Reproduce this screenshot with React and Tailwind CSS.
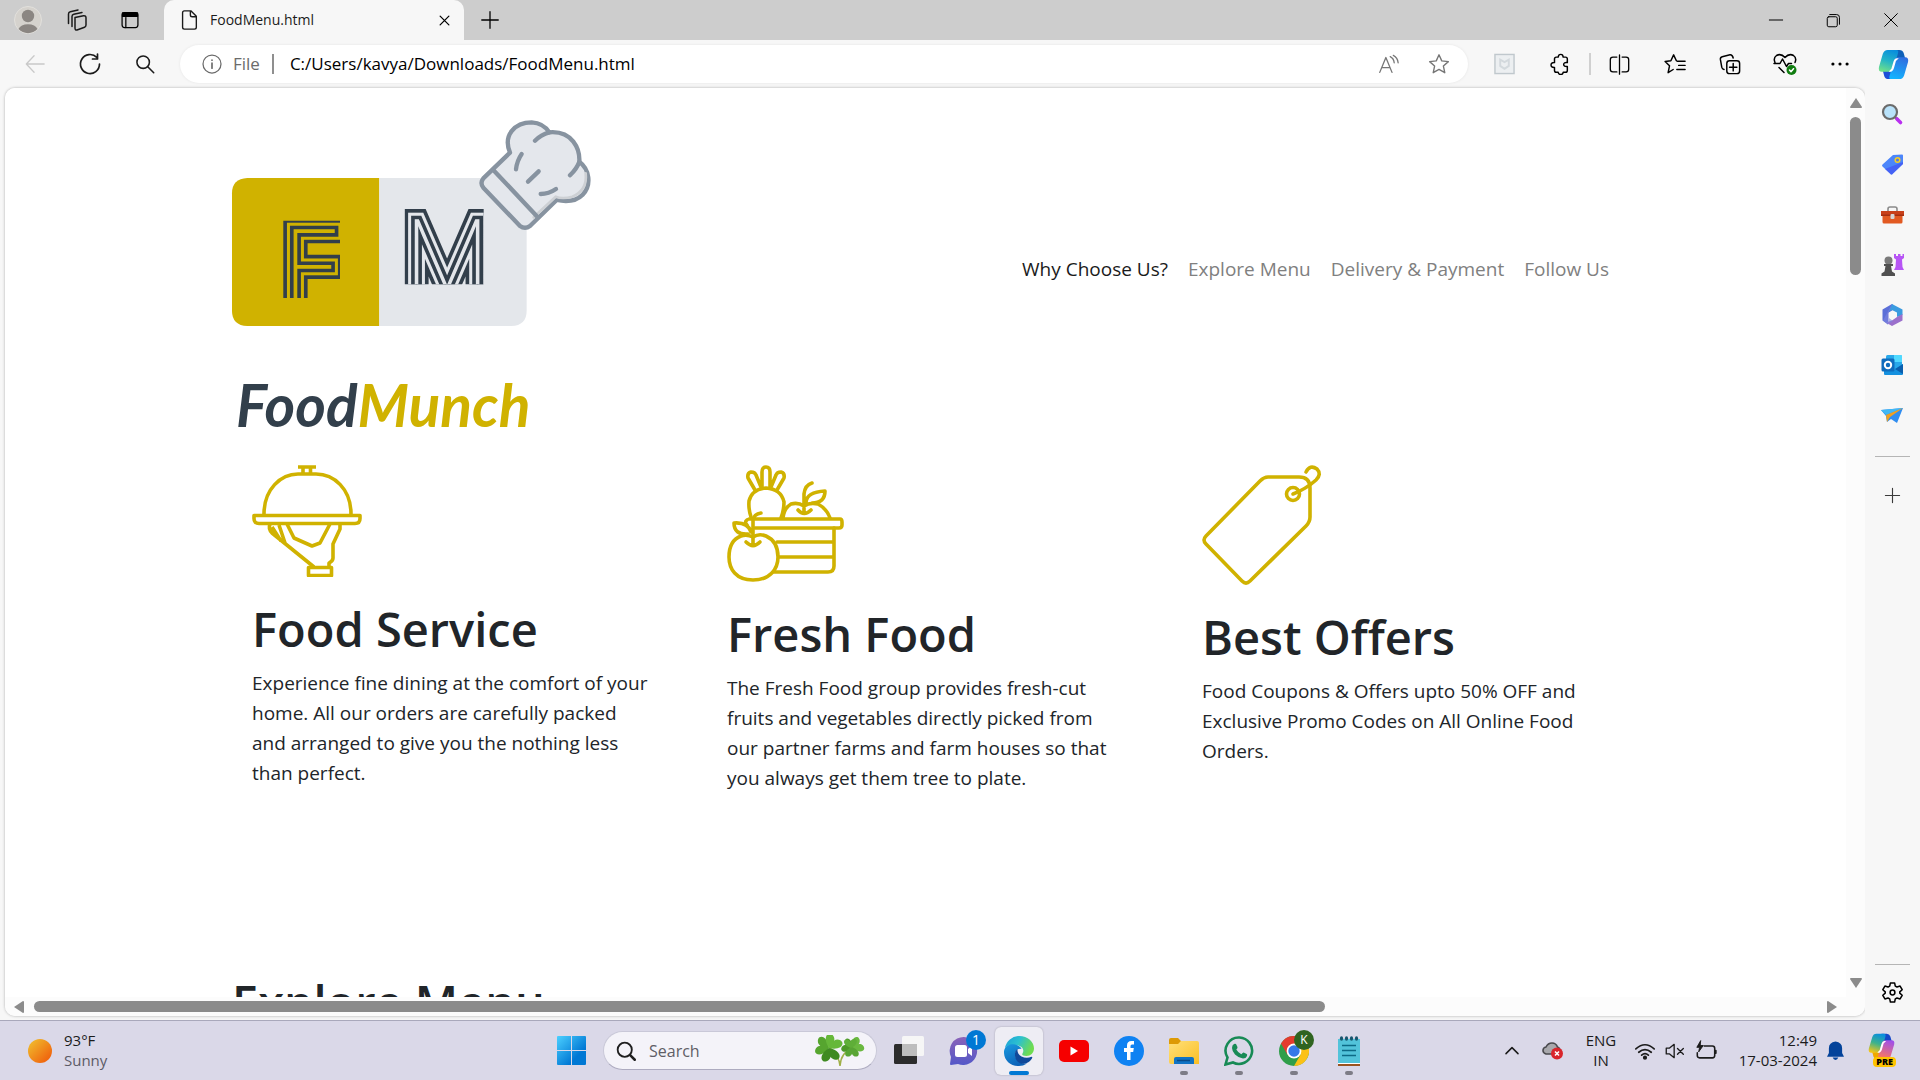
import React from "react";

const GOLD = "#d0b200";
const INK = "#323f4b";

/* ---------- small helpers ---------- */

function Line({ size = 22, sw = 1.5, children, className = "" }) {
  return (
    <svg
      width={size}
      height={size}
      viewBox="0 0 24 24"
      fill="none"
      stroke="currentColor"
      strokeWidth={sw}
      strokeLinecap="round"
      strokeLinejoin="round"
      className={"shrink-0 " + className}
      aria-hidden="true"
    >
      {children}
    </svg>
  );
}

function IconButton({ label, className = "", children }) {
  return (
    <button type="button" aria-label={label} className={"flex shrink-0 items-center justify-center " + className}>
      {children}
    </button>
  );
}

function Copilot({ size = 32, warm = false }) {
  const id = warm ? "cpw" : "cpc";
  return (
    <svg width={size} height={size} viewBox="0 0 32 32" aria-hidden="true" className="shrink-0">
      <defs>
        <linearGradient id={id + "a"} x1="0.6" y1="0" x2="0.3" y2="1">
          <stop offset="0" stopColor="#0a8fdc" />
          <stop offset="0.5" stopColor={warm ? "#3db28c" : "#25b5c6"} />
          <stop offset="1" stopColor={warm ? "#f5c518" : "#6fe08a"} />
        </linearGradient>
        <linearGradient id={id + "b"} x1="0.6" y1="0" x2="0.3" y2="1">
          <stop offset="0" stopColor={warm ? "#a050e8" : "#2f6fe0"} />
          <stop offset="1" stopColor={warm ? "#ff7a59" : "#14b4ff"} />
        </linearGradient>
      </defs>
      <path d="M16 1h6q3.500 0 4.500 3l1.500 5.500h-9q-3 0-4 3z" fill={warm ? "#1447c8" : "#0f60b8"} />
      <path d="M16 31h-5q-3.500 0-4.500-3L5 22.500h8q3 0 4-3z" fill={warm ? "#f0a800" : "#1d4fd8"} />
      <path d="M10 1h9q2.500 0 1.700 3l-4.200 15q-1.200 4.500-5 4.500H4q-4 0-3-5L5 5q1.300-4 5-4z" fill={`url(#${id}a)`} />
      <path d="M22 31h-8.500q-2.500 0-1.700-3L16 13q1.200-4.500 5-4.500h7q4 0 3 5l-4 13.500q-1.300 4-5 4z" fill={`url(#${id}b)`} />
      <path d="M19.500 9.500h2l-3 3-2 7q-1.300 4-4.500 4h-1l2.800-3 2.200-7.500q1-3.500 3.500-3.500z" fill="#fff" />
    </svg>
  );
}

/* ---------- browser chrome ---------- */

function TabStrip() {
  return (
    <div className="flex h-10 shrink-0 items-stretch bg-[#cdcdcd] pl-1">
      <IconButton label="Profile" className="w-12">
        <svg width="28" height="28" viewBox="0 0 28 28" aria-hidden="true">
          <circle cx="14" cy="14" r="13.500" fill="#d5d2cd" stroke="#e2e0dc" />
          <circle cx="14" cy="10" r="6.200" fill="#8b8682" />
          <path d="M4.500 23a10 7 0 0 1 19 0 13 13 0 0 1-19 0z" fill="#8b8682" />
        </svg>
      </IconButton>
      <IconButton label="Workspaces" className="w-[50px] text-[#1b1b1b]">
        <Line size={24} sw={1.500}>
          <path d="M10 9.500l8.500-1.800q2.500-.3 2.500 2V17q0 1.500-1.500 2.200L12 22q-2 .5-2-2z" />
          <path d="M7 18.500V8.500q0-1.800 1.800-2.200L17 4.500" />
          <path d="M3.500 15.500V6q0-1.800 1.800-2.200L13 2" />
        </Line>
      </IconButton>
      <IconButton label="Tab actions" className="w-14 text-black">
        <Line size={20} sw={1.500}>
          <rect x="2.500" y="3" width="19" height="18" rx="3" />
          <path d="M7 9v12" />
          <rect x="3" y="3.500" width="18" height="4" fill="currentColor" />
        </Line>
      </IconButton>
      <div className="ml-[6px] flex w-[300px] items-center rounded-t-[10px] bg-[#f7f7f7] pr-[10px] pl-[14px]">
        <Line size={22} sw={1.500} className="text-[#1b1b1b]">
          <path d="M5 4q0-2 2-2h7l6 6v12q0 2-2 2H7q-2 0-2-2zM13.500 2v4.500q0 2 2 2H20" />
        </Line>
        <span className="ml-[10px] flex-1 text-sm text-[#1b1b1b]">FoodMenu.html</span>
        <IconButton label="Close tab" className="size-5 text-black">
          <Line size={15} sw={2}>
            <path d="M5 5l14 14M19 5L5 19" />
          </Line>
        </IconButton>
      </div>
      <IconButton label="New tab" className="w-[52px] text-black">
        <Line size={22} sw={1.400}>
          <path d="M12 3v18M3 12h18" />
        </Line>
      </IconButton>
      <div className="flex-1" />
      <IconButton label="Minimise" className="w-[58px] text-black">
        <Line size={16} sw={1.500}>
          <path d="M2 12h20" />
        </Line>
      </IconButton>
      <IconButton label="Restore" className="w-[57px] text-black">
        <Line size={15} sw={1.600}>
          <rect x="2" y="6" width="16" height="16" rx="2.500" />
          <path d="M6 2.500h11q4.500 0 4.500 4.500v11" />
        </Line>
      </IconButton>
      <IconButton label="Close" className="w-[58px] text-black">
        <Line size={16} sw={1.500}>
          <path d="M2.500 2.500l19 19M21.500 2.500l-19 19" />
        </Line>
      </IconButton>
    </div>
  );
}

function Toolbar() {
  return (
    <div className="flex h-12 shrink-0 items-center bg-[#f7f7f7] pl-2 text-[#1b1b1b]">
      <IconButton label="Back" className="h-9 w-[54px] text-[#c9c9c9]">
        <Line size={22} sw={1.400}>
          <path d="M22 12H2.500M11 3L2.500 12l8.500 9" />
        </Line>
      </IconButton>
      <IconButton label="Refresh" className="h-9 w-[55px]">
        <Line size={24} sw={1.700}>
          <path d="M21.500 12A9.500 9.500 0 1 1 18.800 5.400M19.500 2v5h-5" />
        </Line>
      </IconButton>
      <IconButton label="Search" className="h-9 w-[55px]">
        <Line size={22} sw={1.700}>
          <circle cx="10" cy="10" r="6.800" />
          <path d="M15 15l6.500 6.500" />
        </Line>
      </IconButton>
      <div className="ml-2 flex h-[38px] flex-1 items-center rounded-full bg-white pl-[22px] pr-[3px] shadow-[0_0_3px_rgba(0,0,0,0.08)]">
        <Line size={20} sw={1.500} className="text-[#6b6b6b]">
          <circle cx="12" cy="12" r="10.800" />
          <path d="M12 11v6M12 7.200v.2" strokeWidth="2" />
        </Line>
        <span className="ml-[11px] text-[17px] text-[#6b6b6b]">File</span>
        <span className="ml-3 h-5 w-[2px] bg-[#8f8f8f]" />
        <input
          aria-label="Address"
          defaultValue="C:/Users/kavya/Downloads/FoodMenu.html"
          className="ml-4 min-w-0 flex-1 bg-transparent text-[17px] text-black outline-none"
        />
        <IconButton label="Read aloud" className="w-[50px] text-[#767676]">
          <Line size={21} sw={1.500}>
            <path d="M2 21L9 4l7 17M4.500 15.500h9M14 3q4 2 4.500 7M17.500 1.500Q22.500 4 23 10" />
          </Line>
        </IconButton>
        <IconButton label="Add to favourites" className="w-[52px] text-[#767676]">
          <Line size={22} sw={1.500}>
            <path d="M12 2l3 6.600 7.200.8-5.400 4.900 1.500 7.200L12 17.900l-6.300 3.600 1.500-7.200L1.800 9.400 9 8.600z" />
          </Line>
        </IconButton>
      </div>
      <IconButton label="McAfee" className="ml-2 h-9 w-14">
        <svg width="21" height="22" viewBox="0 0 22 22" aria-hidden="true">
          <rect x="1" y="1" width="20" height="20" fill="#eceff1" stroke="#c0c8cd" strokeWidth="1.500" />
          <path d="M6.500 6.500L11 9l4.500-2.500V13L11 16l-4.500-3z" fill="none" stroke="#d3d9dd" strokeWidth="2" />
        </svg>
      </IconButton>
      <IconButton label="Extensions" className="h-9 w-14 text-black">
        <Line size={22} sw={1.600}>
          <path d="M8 4.500h2q.3-3 2.800-3t2.700 3H18q2 0 2 2v4q-4-.5-4 2t4 2.200V19q0 2-2 2h-2.500q-.3 2.500-2.700 2.500T10 21H8q-2 0-2-2v-3.200q-3.800.2-3.800-2.700T6 10.500v-4q0-2 2-2z" />
        </Line>
      </IconButton>
      <span className="h-[22px] w-[3px] border-r-2 border-[#d0d0d0]" />
      <IconButton label="Split screen" className="h-9 w-14 text-black">
        <Line size={21} sw={1.500}>
          <path d="M12 1v22M9 3.500H4.500Q1.500 3.500 1.500 6.500v11q0 3 3 3H9M15 3.500h4.500q3 0 3 3v11q0 3-3 3H15" />
        </Line>
      </IconButton>
      <IconButton label="Favourites" className="h-9 w-[55px] text-black">
        <Line size={22} sw={1.600}>
          <path d="M14.500 9H23M16 13.500h7M14 18h9M13.500 8.500L10.500 2 7.500 8.500 1.200 9.200 6 14l-1.500 7.500L10 18" />
        </Line>
      </IconButton>
      <IconButton label="Collections" className="h-9 w-[55px] text-black">
        <Line size={22} sw={1.600}>
          <rect x="8.500" y="8.500" width="14" height="14" rx="3" />
          <path d="M15.500 11.500v8M11.500 15.500h8M5.500 18q-2-.3-2.500-2.500L1.500 7q-.3-2.500 2-3l8.500-2q2.500-.3 3.500 3.500" />
        </Line>
      </IconButton>
      <IconButton label="Browser essentials" className="h-9 w-[55px] text-black">
        <Line size={24} sw={1.500}>
          <path d="M2 10.500Q0 6 3.500 3.500 8 1 12 5.500 16 1 20.500 3.500 24 6 22 10.500M1 11.500h6l2.500-4.500 4 7.500 2-3h3M6 15.500l5 5" />
          <circle cx="18.500" cy="18" r="5" fill="#107c10" stroke="none" />
          <path d="M16.500 18l1.500 1.700 2.500-3" stroke="#fff" />
        </Line>
      </IconButton>
      <IconButton label="Settings and more" className="h-9 w-[55px] text-black">
        <Line size={20}>
          <g fill="currentColor" stroke="none">
            <circle cx="3.500" cy="12" r="1.900" />
            <circle cx="12" cy="12" r="1.900" />
            <circle cx="20.500" cy="12" r="1.900" />
          </g>
        </Line>
      </IconButton>
      <IconButton label="Copilot" className="h-9 w-[53px]">
        <Copilot size={31} />
      </IconButton>
    </div>
  );
}

/* ---------- page ---------- */

function StripedLetter({ x, y, size, bg, children }) {
  const common = {
    x,
    y,
    fontFamily: "Inter, sans-serif",
    fontWeight: 100,
    fontSize: size,
    strokeLinejoin: "miter",
  };
  return (
    <>
      <text {...common} fill={INK} stroke={INK} strokeWidth="66">{children}</text>
      <g aria-hidden="true">
        <text {...common} fill={bg} stroke={bg} strokeWidth="44">{children}</text>
        <text {...common} fill={INK} stroke={INK} strokeWidth="26">{children}</text>
        <text {...common} fill={bg} stroke={bg} strokeWidth="4">{children}</text>
      </g>
    </>
  );
}

function Logo() {
  return (
    <svg width="364" height="338" viewBox="36 0 1092 1014" role="img" aria-label="FoodMunch" className="shrink-0 overflow-visible">
      <defs>
        <clipPath id="fClip">
          <rect x="188" y="362" width="172" height="232" />
        </clipPath>
        <clipPath id="mClip">
          <rect x="554" y="323" width="237" height="230" />
        </clipPath>
      </defs>
      <path d="M478 234v444H82q-46-2-46-46V280q0-44 46-46z" fill={GOLD} />
      <path d="M478 234v444h396q46-2 46-46V280q0-44-46-46z" fill="#e4e7eb" />
      <g clipPath="url(#fClip)">
        <StripedLetter x={188} y={612} size={306} bg={GOLD}>F</StripedLetter>
      </g>
      <g clipPath="url(#mClip)">
        <StripedLetter x={554} y={566} size={284} bg="#e4e7eb">M</StripedLetter>
      </g>
      <g stroke="#8793a0" strokeWidth="13" strokeLinecap="round" strokeLinejoin="round" fill="none">
        <path
          d="M870 158C848 105 885 67 935 67q35 2 53 30 47-4 72 28 20 26 18 60c30 22 38 70 10 99q-27 27-78 16l-80 78q-15 11-30 0L790 263q-11-14 0-28z"
          fill="#e4e7ec"
        />
        <path d="M1097 220q6 50-40 70-30 8-50 0l-66 62" stroke="#cdd0d4" strokeWidth="8" />
        <path d="M945 122q18-18 43-25M1078 185q-7 20-28 41M822 212l130 138" />
        <path d="M905 162q-14 20-17 46M956 214l-32 31M962 282q24 0 46-15" />
      </g>
      <text x="48" y="982" fontFamily="Lato, sans-serif" fontWeight="700" fontStyle="italic" fontSize="176">
        <tspan fill={INK}>Food</tspan>
        <tspan fill={GOLD}>Munch</tspan>
      </text>
    </svg>
  );
}

const serviceIcon = (
  <svg width="110" height="112" viewBox="0 0 110 112" fill="none" stroke={GOLD} strokeWidth="3.600" strokeLinejoin="round" aria-hidden="true">
    <path d="M46 2h18M51 2v7M58.500 2v7M12 49C12 24 29 9 46 9h18c18 0 35 15 35 40" />
    <path d="M2 50.500h106v3q0 5-5 5H7q-5 0-5-5z" />
    <path d="M18 59q-2 5 2 9l42 34M27 60l6 18M29 76L20 62" />
    <path d="M35 59l7 14 18 8 8-3 10-19M88 59v5l-7 15v14q0 3-4 5v4" />
    <path d="M56.500 102.500h23v8h-23z" />
  </svg>
);

const freshIcon = (
  <svg width="117" height="117" viewBox="0 0 117 117" fill="none" stroke={GOLD} strokeWidth="3.600" strokeLinejoin="round" strokeLinecap="round" aria-hidden="true">
    <path d="M24 52C21 43 22 38 22 36q3-12 17-13 15 1 18 14 0 8-3 16" />
    <path d="M35 22V7q0-5 4-5t4 5v15M28 25L21 13q-1-5 3-6 4 0 5 3l5 12M50 25l7-12q1-5-3-6-4 0-5 3l-5 12" />
    <path d="M56 53q1-10 8-14 7-2 13 2 6-4 14-2 9 5 12 14M77 48V29q1-9 8-11M79 37q1-10 19-11 0 12-13 12M71 45q6 7 13 0" />
    <path d="M22 54h91q2 0 2 3v3q0 3-3 3H28M20 55q-3 2 0 5" />
    <path d="M107 63v38q0 6-6 6H47M50 77h56M52 92h54" />
    <path d="M26 72q6-4 13-1c9 4 12 13 12 21 0 12-8 23-25 23S2 104 2 92c0-10 4-18 12-21q6-2 12 1z" />
    <path d="M26 80V55q1-6 8-7M21 69Q7 70 7 58q14-1 17 9M19 77q7 7 14 0" />
  </svg>
);

const offerIcon = (
  <svg width="120" height="120" viewBox="0 0 120 120" fill="none" stroke={GOLD} strokeWidth="3.600" strokeLinejoin="round" strokeLinecap="round" className="overflow-visible" aria-hidden="true">
    <path d="M66 12h31q11 0 11 11v29q0 5-4 9l-56 55q-4 4-8 0L4 79q-4-4 0-8l54-55q4-4 8-4z" />
    <circle cx="91" cy="29" r="6.500" />
    <path d="M91 29q13-5 23-14 6-6 1-11-7-5-11 3" />
  </svg>
);

const FEATURES = [
  {
    icon: serviceIcon,
    title: "Food Service",
    text: "Experience fine dining at the comfort of your home. All our orders are carefully packed and arranged to give you the nothing less than perfect.",
  },
  {
    icon: freshIcon,
    title: "Fresh Food",
    text: "The Fresh Food group provides fresh-cut fruits and vegetables directly picked from our partner farms and farm houses so that you always get them tree to plate.",
  },
  {
    icon: offerIcon,
    title: "Best Offers",
    text: "Food Coupons & Offers upto 50% OFF and Exclusive Promo Codes on All Online Food Orders.",
  },
];

const LINKS = ["Why Choose Us?", "Explore Menu", "Delivery & Payment", "Follow Us"];

function Page() {
  return (
    <div className="min-h-0 min-w-0 flex-1 overflow-hidden bg-white text-[#212529]">
      <div className="mx-auto max-w-[1425px]">
        <header className="flex items-center justify-between px-[19px] pt-3">
          <Logo />
          <nav className="flex text-[19px]">
            {LINKS.map((l, i) => (
              <a key={l} href="#" className={"px-[10px] py-2 " + (i === 0 ? "text-[#1a1a1a]" : "text-[#808080]")}>
                {l}
              </a>
            ))}
          </nav>
        </header>
        <section className="mt-[27px] grid grid-cols-3">
          {FEATURES.map((f) => (
            <article key={f.title} className="px-[39px]">
              {f.icon}
              <h1 className="mt-[22px] text-[47px] leading-[60px] font-semibold">{f.title}</h1>
              <p className="mt-[9px] text-[19px] leading-[30px]">{f.text}</p>
            </article>
          ))}
        </section>
        <h1 className="mt-[179px] px-[19px] text-[47px] leading-[60px] font-semibold">Explore Menu</h1>
      </div>
    </div>
  );
}

function Viewport() {
  return (
    <main className="mb-1 ml-[5px] flex min-w-0 flex-1 flex-col overflow-hidden rounded-[10px] bg-[#fcfcfc] shadow-[0_0_3px_rgba(0,0,0,0.3)]">
      <div className="flex min-h-0 flex-1">
        <Page />
        <div className="flex w-[19px] flex-col items-center bg-[#fcfcfc] pt-[10px] pb-[9px]">
          <svg width="12" height="10" viewBox="0 0 12 10" fill="#8b8b8b" aria-hidden="true">
            <path d="M6 0l6 9q0 1-1 1H1q-1 0-1-1z" />
          </svg>
          <div className="mt-[9px] h-[158px] w-[11px] rounded-full bg-[#8b8b8b]" />
          <svg width="12" height="10" viewBox="0 0 12 10" fill="#8b8b8b" className="mt-auto" aria-hidden="true">
            <path d="M6 10l6-9q0-1-1-1H1Q0 0 0 1z" />
          </svg>
        </div>
      </div>
      <div className="flex h-[19px] shrink-0 items-center bg-[#fcfcfc] pr-[28px] pl-[9px]">
        <svg width="10" height="12" viewBox="0 0 10 12" fill="#8b8b8b" aria-hidden="true">
          <path d="M0 6l9-6q1 0 1 1v10q0 1-1 1z" />
        </svg>
        <div className="ml-[10px] flex min-w-0 flex-1">
          <div className="h-[11px] w-[72%] rounded-full bg-[#8b8b8b]" />
        </div>
        <svg width="10" height="12" viewBox="0 0 10 12" fill="#8b8b8b" aria-hidden="true">
          <path d="M10 6L1 0Q0 0 0 1v10q0 1 1 1z" />
        </svg>
      </div>
    </main>
  );
}

/* ---------- Edge sidebar ---------- */

const SIDE = [
  [
    "Search",
    <>
      <circle cx="9" cy="8" r="7" fill="#b9e2fa" stroke="#6b6b6b" strokeWidth="2.200" />
      <path d="M14 13l3 3" stroke="#6b6b6b" strokeWidth="2.500" />
      <path d="M16 15l3.500 3.500" stroke="#b92ff0" strokeWidth="3.600" strokeLinecap="round" />
    </>,
  ],
  [
    "Shopping",
    <>
      <path d="M12 1l9-.5q1 0 1 1V10L11.500 20q-1 1-2 0L1.500 12.500q-1-1 0-2z" fill="#4c86fa" />
      <path d="M22 8v2L11.500 20q-1 1-2 0L4 15z" fill="#4353f2" opacity=".7" />
      <circle cx="16.500" cy="6" r="2.300" fill="#5a7ae0" stroke="#f8cf20" strokeWidth="1.500" />
    </>,
  ],
  [
    "Tools",
    <>
      <path d="M7 7V5q0-2 2-2h5q2 0 2 2v2" fill="none" stroke="#8b8b8b" strokeWidth="1.600" />
      <path d="M0 7h23v5H0z" fill="#c8401a" />
      <path d="M1.500 11h20v7q0 1.500-1.500 1.500H3q-1.500 0-1.500-1.500z" fill="#e25a22" />
      <path d="M0 10.500h23v1.500H0z" fill="#a52f10" />
      <rect x="9.500" y="10" width="4" height="5" rx="1" fill="#d6d6d6" />
    </>,
  ],
  [
    "Games",
    <>
      <path d="M13 0h2v2h2V0h2.500v2h2V0H23v4l-2 1.500.5 7.500 1.500 3H13l1.500-3 .5-7.500L13 4z" fill="#b755f5" />
      <circle cx="7.500" cy="6.500" r="4" fill="#7a7a7a" />
      <path d="M3 10h9v2h-2l1 5.500 3 2V22H.5v-2.500l3-2 1-5.500H3z" fill="#505050" />
    </>,
  ],
  [
    "Microsoft 365",
    <>
      <path d="M11 0L1.500 5.500v11l5.500 4V9l8-5z" fill="#5b6fd8" />
      <path d="M11 0l10.500 5.500V11L16 13V8.500L11 6 8 7.500z" fill="#3a9be0" />
      <path d="M21.500 10v6.500L11 22l-6-3.500 6-2 5-3.500z" fill="#9b70cc" />
      <path d="M11 0L8 7.500V14l4 3-5 3.500-5-4z" fill="#7f86e0" opacity=".6" />
      <circle cx="11.500" cy="11" r="3.600" fill="#f7f7f7" />
    </>,
  ],
  [
    "Outlook",
    <>
      <rect x="5" y="1" width="16" height="17" rx="1.500" fill="#28a8ea" />
      <path d="M13 1h7q1 0 1 1v6h-8z" fill="#50d9ff" />
      <path d="M3 12l10 4 9-6v10q0 1-1 1H4q-1 0-1-1z" fill="#1490df" />
      <path d="M22 10v10l-8-5z" fill="#0a5fae" />
      <rect x="0.500" y="4.500" width="13" height="13" rx="1.500" fill="#0f6cbd" />
      <circle cx="7" cy="11" r="3.200" fill="none" stroke="#fff" strokeWidth="2" />
    </>,
  ],
  [
    "Drop",
    <>
      <path d="M0 6l22-2-6 15-6-4-4 3-1-6z" fill="#2f8df0" />
      <path d="M0 6l22-2L5 11z" fill="#41b8f5" />
      <path d="M22 4L5 11l1 7 3-5z" fill="#f0a020" />
    </>,
  ],
];

function Sidebar() {
  return (
    <aside className="flex w-[55px] shrink-0 flex-col items-center bg-[#f7f7f7] pt-px">
      {SIDE.map(([name, art]) => (
        <IconButton key={name} label={name} className="h-[50px] w-full">
          <svg width="23" height="23" viewBox="0 -1 23 23" aria-hidden="true">
            {art}
          </svg>
        </IconButton>
      ))}
      <div className="mt-[17px] h-px w-[35px] shrink-0 bg-[#b5b5b5]" />
      <IconButton label="Customise" className="mt-[13px] h-[50px] w-full text-[#3a3a3a]">
        <Line size={17} sw={1.600}>
          <path d="M12 2v20M2 12h20" />
        </Line>
      </IconButton>
      <div className="mt-auto h-px w-[35px] shrink-0 bg-[#b5b5b5]" />
      <IconButton label="Settings" className="mb-px h-[54px] w-full text-black">
        <Line size={23} sw={1.600}>
          <circle cx="12" cy="12" r="2.500" />
          <path d="M9.800 2h4.400l.7 3.300 1.800 1 3.200-1 2.200 3.800-2.500 2.200v1.400l2.500 2.200-2.200 3.800-3.200-1-1.800 1-.7 3.300H9.800l-.7-3.300-1.800-1-3.200 1-2.200-3.800 2.500-2.200v-1.400L1.900 9.100l2.200-3.800 3.200 1 1.800-1z" />
        </Line>
      </IconButton>
    </aside>
  );
}

/* ---------- taskbar ---------- */

function Clover() {
  const heart = "M0 0C-8-3-11-9-8-12-5-14-1-12 0-9 1-12 5-14 8-12 11-9 8-3 0 0z";
  return (
    <svg width="50" height="32" viewBox="0 0 50 32" aria-hidden="true" className="shrink-0">
      <path d="M14 12q10 8 11 19M37 14Q26 17 25 31" fill="none" stroke="#a0b048" strokeWidth="1.500" />
      <path d={heart} transform="translate(14 13) rotate(-75)" fill="#56a52f" />
      <path d={heart} transform="translate(14 13) rotate(35)" fill="#66b83a" />
      <path d={heart} transform="translate(14 13) rotate(170)" fill="#3f8a22" />
      <path d={heart} transform="translate(37 13) rotate(-65) scale(.75)" fill="#4c9828" />
      <path d={heart} transform="translate(37 13) rotate(60) scale(.85)" fill="#6ab840" />
      <path d={heart} transform="translate(37 12) rotate(180) scale(.75)" fill="#58a434" />
      <path d={heart} transform="translate(36 13) rotate(-5) scale(.7)" fill="#5fae38" />
    </svg>
  );
}

const APPS = [
  {
    name: "Task view",
    art: (
      <>
        <rect x="0" y="8" width="23" height="20" rx="1.500" fill="#2c2c2c" />
        <rect x="8" y="0" width="22" height="20" rx="1.500" fill="#f6f6f6" />
        <path d="M8 8h15v12H9q-1 0-1-1z" fill="#bdbdbd" />
      </>
    ),
  },
  {
    name: "Chat",
    badge: "1",
    art: (
      <>
        <path d="M15 1a14 14 0 1 1-6 27l-7 1q-1 0-1-1l1-7A14 14 0 0 1 15 1z" fill="url(#chatg)" />
        <rect x="6" y="9" width="12" height="12" rx="2.500" fill="#fff" />
        <path d="M19 13l4-3v10l-4-3z" fill="#fff" />
      </>
    ),
  },
  {
    name: "Edge",
    active: true,
    art: (
      <>
        <path d="M1 12A14.500 14.500 0 0 1 15 0c9 0 15 6 15 12.500 0 4.500-3.500 7.500-7.500 7.500-3.500 0-5-1.200-4-2.500 2.500-4-1-8-5.500-8C7 9 3 9 1 12z" fill="url(#edgea)" />
        <path d="M0 15C1 9.500 6 7.500 11 8.500q5 1 6.500 4.500Q12 12 11 18c0 5 5 10 12 9.500Q19 30 15 30C6 30-.5 24 0 15z" fill="url(#edgeb)" />
        <path d="M11 18.500q-.5-3.500 2.500-5.500-.5 5 4 7.500 5 2.300 10 .2 1.500 0 .3 2-3 4.500-8 5C14 28 10.500 23 11 18.500z" fill="#10499a" />
      </>
    ),
  },
  {
    name: "YouTube",
    art: (
      <>
        <rect x="0" y="4" width="30" height="22" rx="5" fill="#f60000" />
        <path d="M11.500 10.500L19 15l-7.500 4.500z" fill="#fff" />
      </>
    ),
  },
  {
    name: "Facebook",
    art: (
      <>
        <circle cx="15" cy="15" r="15" fill="#0f82f2" />
        <path d="M13 24v-8h-3v-4h3v-2.500Q13 5 17.500 5H20v3.500h-2q-1.500 0-1.500 1.500v2h3.300l-.6 4h-2.700v8z" fill="#fff" />
      </>
    ),
  },
  {
    name: "File Explorer",
    running: true,
    art: (
      <>
        <path d="M0 4q0-2 2-2h7l3 3h8v8H0z" fill="#dd9a05" />
        <path d="M0 8h9l3-3h16q2 0 2 2v21H2q-2 0-2-2z" fill="url(#foldg)" />
        <path d="M5 28v-5q0-2 2-2h16q2 0 2 2v5z" fill="#1173c4" />
        <path d="M8 24.500h13" stroke="#0a4a86" strokeWidth="1.500" />
      </>
    ),
  },
  {
    name: "WhatsApp",
    running: true,
    art: (
      <>
        <path d="M15.500 1.500a13.200 13.200 0 1 1-6.500 25L1.500 28.500 3.500 21.500a13.200 13.200 0 0 1 12-20z" fill="none" stroke="#178a55" strokeWidth="2.600" />
        <path d="M10 8q1-.5 2 0l1.500 3q.3 1-1.200 2.500 2 3.500 5 4.700 1.700-2 2.400-1.800l3 1.500q.8.500.3 2-1 2.500-4 2.600-4.500-.5-8-4Q8 15 8 12q0-3 2-4z" fill="#178a55" />
      </>
    ),
  },
  {
    name: "Chrome",
    running: true,
    badge: "K",
    art: (
      <>
        <circle cx="15" cy="15" r="15" fill="#2f9e4a" />
        <path d="M2 7.500A15 15 0 0 1 28 7.500H15L8.500 18.700z" fill="#e33b2e" />
        <path d="M28 7.500A15 15 0 0 1 15 30l6.500-11.300L15 7.500z" fill="#fbc116" />
        <circle cx="15" cy="15" r="7.400" fill="#fff" />
        <circle cx="15" cy="15" r="5.700" fill="#3478e8" />
      </>
    ),
  },
  {
    name: "Notepad",
    running: true,
    art: (
      <>
        <path d="M4 3h22v24H4z" fill="#52c3da" />
        <path d="M4 27h22v1H4z" fill="#fff" />
        <path d="M4 28h22v2H4z" fill="#9a5420" />
        <path d="M8 9.500h14M8 14.500h14M8 19.500h14" stroke="#0d6a86" strokeWidth="1.700" />
        <g fill="#17566e">
          <ellipse cx="7.500" cy="2.500" rx="1.600" ry="2.300" />
          <ellipse cx="12.500" cy="2.500" rx="1.600" ry="2.300" />
          <ellipse cx="17.500" cy="2.500" rx="1.600" ry="2.300" />
          <ellipse cx="22.500" cy="2.500" rx="1.600" ry="2.300" />
        </g>
      </>
    ),
  },
];

function AppButton({ app }) {
  return (
    <button type="button" aria-label={app.name} className="relative flex h-12 w-[55px] shrink-0 items-center justify-center">
      <span
        className={
          "flex h-12 w-12 items-center justify-center rounded-md " +
          (app.active ? "bg-[#eeedf4] shadow-[0_0_2px_rgba(0,0,0,0.25)]" : "")
        }
      >
        <svg width="30" height="30" viewBox="0 0 30 30" aria-hidden="true">
          {app.art}
        </svg>
      </span>
      {app.badge === "1" && (
        <span className="absolute top-[3px] right-[5px] flex size-5 items-center justify-center rounded-full bg-[#0078d4] text-sm leading-5 text-white">1</span>
      )}
      {app.badge === "K" && (
        <span className="absolute top-[3px] right-[7px] flex size-5 items-center justify-center rounded-full bg-[#2f6420] text-xs leading-5 text-white">K</span>
      )}
      {app.active && <span className="absolute bottom-0 h-1 w-5 rounded-full bg-[#0078d4]" />}
      {app.running && <span className="absolute bottom-0 h-1 w-2 rounded-full bg-[#7d7c86]" />}
    </button>
  );
}

function Taskbar() {
  return (
    <footer className="grid h-[60px] shrink-0 grid-cols-[1fr_auto_1fr] items-center border-t border-[#a9a8bb] bg-[#dad8e8] text-[15px] text-[#1b1b1b]">
      <svg width="0" height="0" className="absolute" aria-hidden="true">
        <defs>
          <linearGradient id="sung" x1="0" y1="0" x2="1" y2="1">
            <stop offset="0.100" stopColor="#f0b92c" />
            <stop offset="0.800" stopColor="#f06a10" />
          </linearGradient>
          <linearGradient id="wing" x1="0" y1="0" x2="1" y2="1">
            <stop offset="0" stopColor="#4cd0ff" />
            <stop offset="0.700" stopColor="#0078d4" />
          </linearGradient>
          <linearGradient id="chatg" x1="0" y1="0" x2="0" y2="1">
            <stop offset="0" stopColor="#8a62b8" />
            <stop offset="1" stopColor="#5458c8" />
          </linearGradient>
          <linearGradient id="edgea" x1="0" y1="0" x2="1" y2="0.400">
            <stop offset="0" stopColor="#1a9fd8" />
            <stop offset="0.500" stopColor="#2cc0d0" />
            <stop offset="1" stopColor="#6fdc50" />
          </linearGradient>
          <linearGradient id="edgeb" x1="0" y1="0" x2="0.500" y2="1">
            <stop offset="0" stopColor="#1a9be0" />
            <stop offset="1" stopColor="#0c62b8" />
          </linearGradient>
          <linearGradient id="foldg" x1="0" y1="0" x2="1" y2="1">
            <stop offset="0" stopColor="#ffe07a" />
            <stop offset="1" stopColor="#fbbf24" />
          </linearGradient>
        </defs>
      </svg>
      <button type="button" className="flex items-center justify-self-start pl-7 text-left">
        <svg width="24" height="24" viewBox="0 0 24 24" aria-hidden="true">
          <circle cx="12" cy="12" r="12" fill="url(#sung)" />
        </svg>
        <span className="ml-3 flex flex-col pb-[2px] leading-5">
          <span>93°F</span>
          <span className="text-[#5c5b66]">Sunny</span>
        </span>
      </button>

      <div className="flex items-center">
        <IconButton label="Start" className="h-12 w-[55px]">
          <svg width="29" height="29" viewBox="0 0 29 29" fill="url(#wing)" aria-hidden="true">
            <path d="M1 0h13v14H0V1q0-1 1-1zM15 0h13q1 0 1 1v13H15zM0 15h14v14H1q-1 0-1-1zM15 15h14v13q0 1-1 1H15z" />
          </svg>
        </IconButton>
        <label className="mx-1 flex h-[39px] w-[274px] items-center rounded-full border border-[#c9c8d8] border-b-[#adabc0] bg-[#f4f3f9] pr-[11px] pl-3">
          <Line size={20} sw={2.200} className="text-[#1f1f1f]">
            <circle cx="10.500" cy="10.500" r="8.500" />
            <path d="M17 17l5.500 5.500" strokeWidth="3" />
          </Line>
          <input
            type="text"
            aria-label="Search"
            placeholder="Search"
            className="ml-[13px] min-w-0 flex-1 bg-transparent text-base outline-none placeholder:text-[#5f5e66]"
          />
          <Clover />
        </label>
        {APPS.map((a) => (
          <AppButton key={a.name} app={a} />
        ))}
      </div>

      <div className="flex items-center justify-self-end pr-[11px]">
        <IconButton label="Show hidden icons" className="h-10 w-10">
          <Line size={16} sw={2.300}>
            <path d="M3 16l9-9 9 9" />
          </Line>
        </IconButton>
        <IconButton label="OneDrive" className="h-10 w-10">
          <svg width="21" height="19" viewBox="0 0 21 19" aria-hidden="true">
            <path d="M4 13Q1 12 1 9.500 1 6.500 4 6q2-4 6-4 4 0 5.500 4Q18 7 18 10v3z" fill="#a8a8ac" stroke="#4a4a4e" strokeWidth="1.600" />
            <circle cx="15" cy="12.500" r="6" fill="#d9252b" />
            <path d="M13 10.500l4 4M17 10.500l-4 4" stroke="#fff" strokeWidth="1.500" />
          </svg>
        </IconButton>
        <button type="button" className="flex w-[58px] flex-col items-center pb-[2px] leading-5">
          <span>ENG</span>
          <span>IN</span>
        </button>
        <button type="button" aria-label="Network, volume and battery" className="flex items-center gap-[10px] px-[5px]">
          <Line size={20} sw={2}>
            <path d="M1 9.500Q12-.5 23 9.500M4.500 13.500q7.500-6.500 15 0M8 17q4-3.500 8 0" />
            <circle cx="12" cy="20" r="1.500" fill="currentColor" />
          </Line>
          <Line size={20} sw={1.600}>
            <path d="M1.500 8.500h4L11 4v16l-5.500-4.500h-4zM15 9l7 7M22 9l-7 7" />
          </Line>
          <Line size={22} sw={1.700}>
            <path d="M10 6.500h9q2.500 0 2.500 2.500v8q0 2.500-2.500 2.500H5q-2.500 0-2.500-2.500V14M22.800 11.500v3" />
            <path d="M6 1L2 8h3l-1 5 5-7H6z" fill="currentColor" strokeWidth="1" />
          </Line>
        </button>
        <button type="button" className="ml-2 flex w-[87px] flex-col items-end pb-[2px] leading-5">
          <span>12:49</span>
          <span>17-03-2024</span>
        </button>
        <IconButton label="Notifications" className="h-10 w-9">
          <svg width="17" height="20" viewBox="0 0 18 20" fill="#04439a" aria-hidden="true">
            <path d="M9 0q7 1 7 7v5l2 4H0l2-4V7q0-6 7-7zM6 17h6q-1 2.500-3 2.500T6 17z" />
          </svg>
        </IconButton>
        <button type="button" aria-label="Copilot preview" className="relative flex h-10 w-14 items-center justify-center pb-2">
          <Copilot size={27} warm />
          <span className="absolute right-[13px] bottom-1 rounded-sm bg-[#ffc400] px-[3px] text-[9px] leading-[10px] font-extrabold text-black">PRE</span>
        </button>
      </div>
    </footer>
  );
}

export default function App() {
  return (
    <div className="flex h-screen flex-col overflow-hidden bg-[#f7f7f7] font-['Open_Sans',sans-serif]">
      <TabStrip />
      <Toolbar />
      <div className="flex min-h-0 flex-1">
        <Viewport />
        <Sidebar />
      </div>
      <Taskbar />
    </div>
  );
}
